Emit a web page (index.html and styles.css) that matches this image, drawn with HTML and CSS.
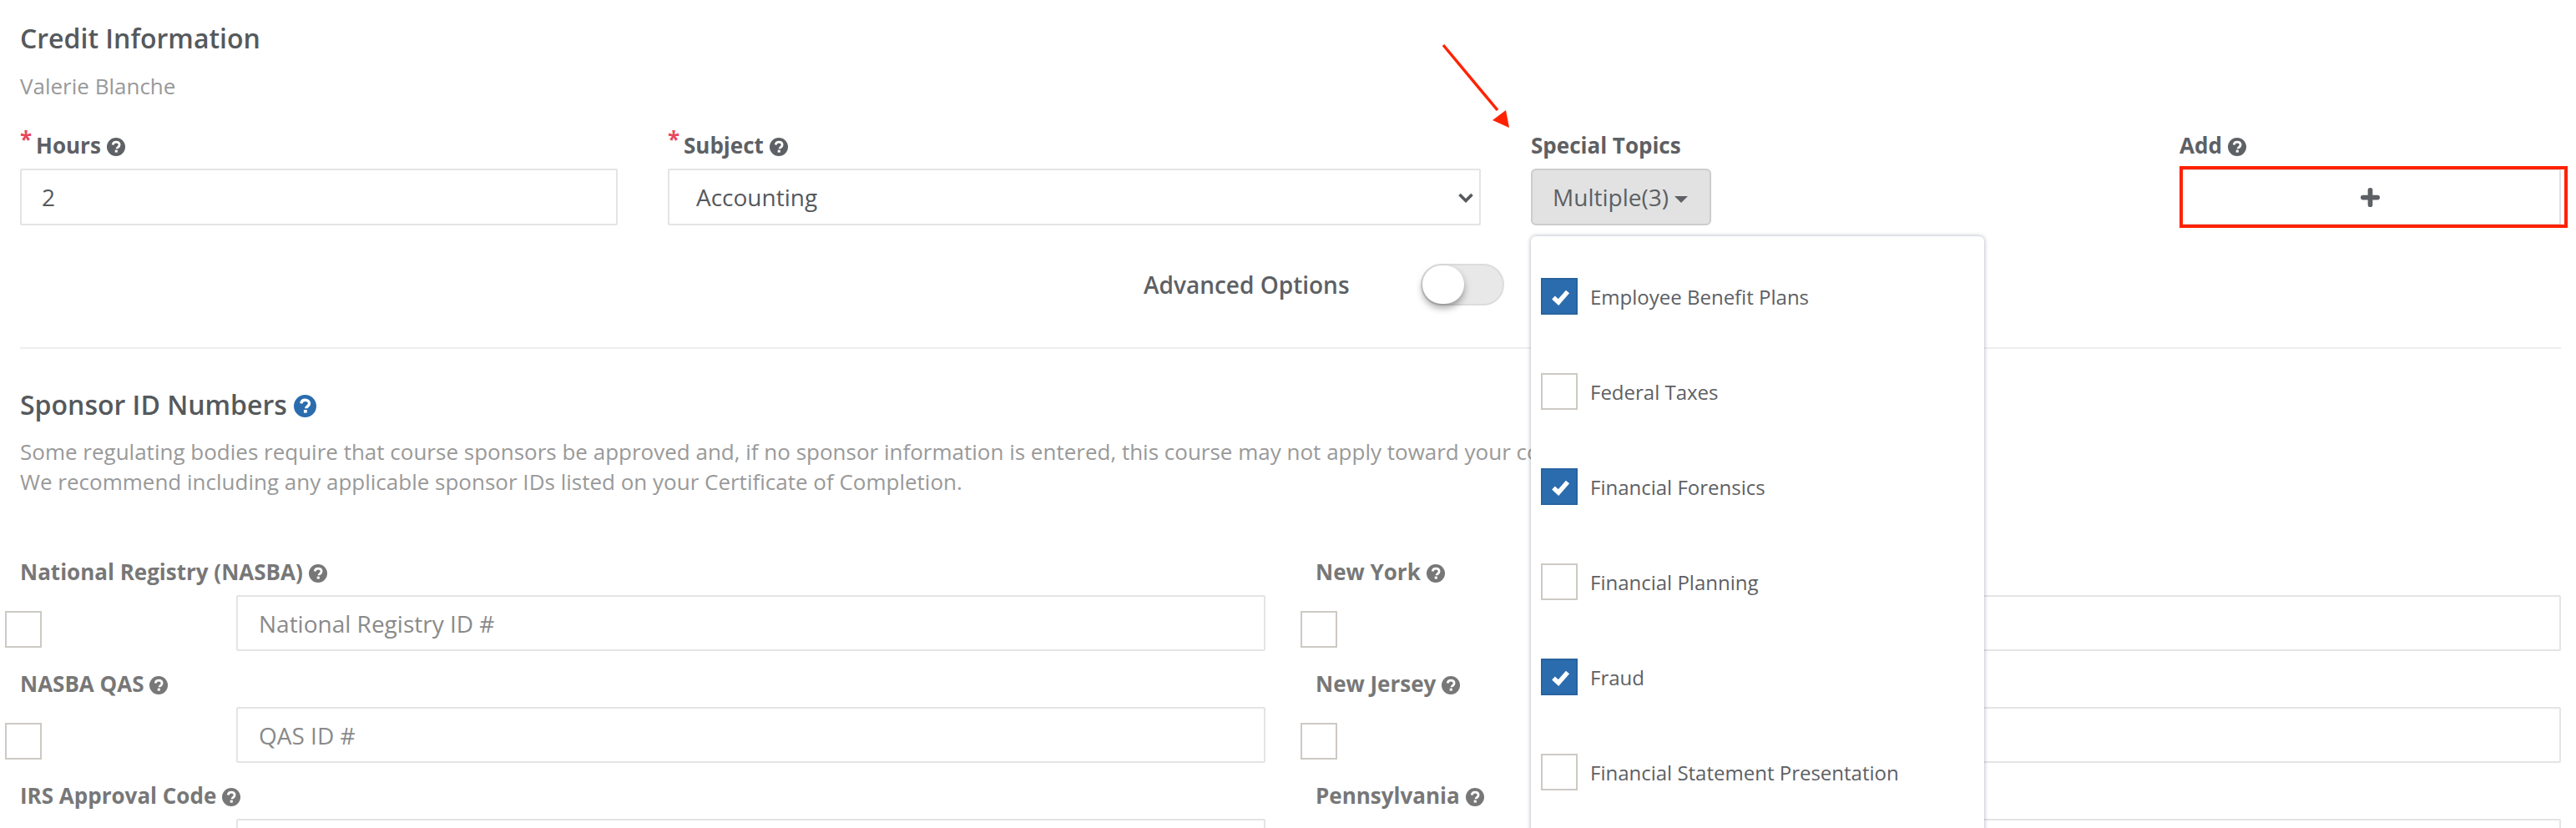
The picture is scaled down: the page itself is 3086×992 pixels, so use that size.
FILE: index.html
```html
<!DOCTYPE html>
<html lang="en">
<head>
<meta charset="utf-8">
<title>Credit Information</title>
<link rel="stylesheet" href="styles.css">
</head>
<body>
<svg class="defs" width="0" height="0" aria-hidden="true">
  <symbol id="q" viewBox="0 0 24 24">
    <circle cx="12" cy="12" r="12" fill="currentColor"/>
    <path d="M7.800 9.200C8.200 6.800 9.900 5.600 12.200 5.600c2.500 0 4.300 1.500 4.300 3.600 0 3.100-3.400 3-3.400 5.200" fill="none" stroke="#fff" stroke-width="3"/>
    <rect x="10.600" y="16" width="3.400" height="3.200" fill="#fff"/>
  </symbol>
  <symbol id="check" viewBox="0 0 44 44">
    <path d="M15 23.500l6 5.500 11-12.500" fill="none" stroke="#fff" stroke-width="5.500"/>
  </symbol>
</svg>
<main class="page">
  <h1 class="title">Credit Information</h1>
  <p class="person">Valerie Blanche</p>

  <div class="fields">
    <div class="field">
      <label class="label"><span class="req">*</span>Hours <svg class="qi"><use href="#q"/></svg></label>
      <input class="control" type="text" value="2">
    </div>
    <div class="field">
      <label class="label"><span class="req">*</span>Subject <svg class="qi"><use href="#q"/></svg></label>
      <div class="select-wrap">
        <select class="control select"><option>Accounting</option></select>
        <svg class="chev" viewBox="0 0 18 12"><path d="M1.500 2l7.500 7.500L16.500 2" fill="none" stroke="currentColor" stroke-width="3.600"/></svg>
      </div>
    </div>
    <div class="field topics">
      <label class="label">Special Topics</label>
      <button class="multi" type="button">Multiple(3)<span class="caret"></span></button>
      <div class="menu">
        <div class="item"><span class="box on"><svg class="tick"><use href="#check"/></svg></span>Employee Benefit Plans</div>
        <div class="item"><span class="box"></span>Federal Taxes</div>
        <div class="item"><span class="box on"><svg class="tick"><use href="#check"/></svg></span>Financial Forensics</div>
        <div class="item"><span class="box"></span>Financial Planning</div>
        <div class="item"><span class="box on"><svg class="tick"><use href="#check"/></svg></span>Fraud</div>
        <div class="item"><span class="box"></span>Financial Statement Presentation</div>
      </div>
    </div>
    <div class="field add">
      <label class="label">Add <svg class="qi"><use href="#q"/></svg></label>
      <button class="add-btn" type="button">
        <svg class="plus" viewBox="0 0 24 24"><path d="M12 3v18M3 12h18" fill="none" stroke="currentColor" stroke-width="6" stroke-linecap="round"/></svg>
      </button>
      <span class="mark"></span>
    </div>
  </div>

  <div class="advanced">
    <span class="advanced-label">Advanced Options</span>
    <span class="toggle"><span class="knob"></span></span>
  </div>

  <hr class="rule">

  <h2 class="subtitle">Sponsor ID Numbers <svg class="qi-blue"><use href="#q"/></svg></h2>
  <p class="note">Some regulating bodies require that course sponsors be approved and, if no sponsor information is entered, this course may not apply toward your continuing education requirements.<br>We recommend including any applicable sponsor IDs listed on your Certificate of Completion.</p>

  <div class="sponsors">
    <div class="sponsor">
      <label class="label-soft">National Registry (NASBA) <svg class="qi"><use href="#q"/></svg></label>
      <div class="sponsor-row"><span class="box"></span><input class="control id" type="text" placeholder="National Registry ID #"></div>
    </div>
    <div class="sponsor">
      <label class="label-soft">New York <svg class="qi"><use href="#q"/></svg></label>
      <div class="sponsor-row"><span class="box"></span><input class="control id" type="text"></div>
    </div>
    <div class="sponsor">
      <label class="label-soft">NASBA QAS <svg class="qi"><use href="#q"/></svg></label>
      <div class="sponsor-row"><span class="box"></span><input class="control id" type="text" placeholder="QAS ID #"></div>
    </div>
    <div class="sponsor">
      <label class="label-soft">New Jersey <svg class="qi"><use href="#q"/></svg></label>
      <div class="sponsor-row"><span class="box"></span><input class="control id" type="text"></div>
    </div>
    <div class="sponsor">
      <label class="label-soft">IRS Approval Code <svg class="qi"><use href="#q"/></svg></label>
      <div class="sponsor-row"><span class="box"></span><input class="control id" type="text"></div>
    </div>
    <div class="sponsor">
      <label class="label-soft">Pennsylvania <svg class="qi"><use href="#q"/></svg></label>
      <div class="sponsor-row"><span class="box"></span><input class="control id" type="text"></div>
    </div>
  </div>

  <svg class="arrow" viewBox="0 0 100 120" aria-hidden="true">
    <path d="M9 10L74 88" fill="none" stroke="#ff2200" stroke-width="3.500"/>
    <path d="M88 109L68 100L84 88Z" fill="#ff2200"/>
  </svg>
</main>
</body>
</html>
```

FILE: styles.css
```css
* { box-sizing: border-box; }

html, body {
  margin: 0;
  height: 992px;
  overflow: hidden;
  background: #fff;
}

body {
  font-family: "Open Sans", "Liberation Sans", sans-serif;
  color: #55595c;
}

.defs { position: absolute; }

.page {
  position: relative;
  height: 992px;
  padding: 26px 10px 0 24px;
  overflow: hidden;
}

.title {
  margin: 0;
  font-size: 32px;
  line-height: 40px;
  font-weight: 600;
}

.person {
  margin: 19px 0 0;
  font-size: 26px;
  line-height: 36px;
  color: #999;
}

.fields {
  display: grid;
  grid-template-columns: 716px 974px 717px 1fr;
  column-gap: 60px;
  margin-top: 35px;
}

.field { position: relative; }

.label {
  display: block;
  height: 36px;
  margin-bottom: 10px;
  font-size: 26px;
  line-height: 36px;
  font-weight: 700;
  color: #5d6064;
  white-space: nowrap;
}

.req {
  display: inline-block;
  width: 19px;
  vertical-align: 7px;
  line-height: 20px;
  color: #e8475f;
}

.qi {
  width: 22px;
  height: 22px;
  vertical-align: -3px;
}

.control {
  display: block;
  width: 100%;
  height: 68px;
  padding: 0 24px;
  border: 2px solid #e4e4e4;
  border-radius: 2px;
  background: #fff;
  font: 28px "Open Sans", "Liberation Sans", sans-serif;
  color: #55595c;
  outline: none;
}

.control::placeholder { color: #8a8a8a; opacity: 1; }

.select-wrap { position: relative; }

.select {
  appearance: none;
  padding-left: 32px;
}

.chev {
  position: absolute;
  top: 29px;
  right: 9px;
  width: 18px;
  height: 12px;
  color: #55595c;
}

.multi {
  display: block;
  width: 216px;
  height: 68px;
  padding: 0 2px 0 0;
  border: 2px solid #ccc;
  border-radius: 6px;
  background: #e2e2e2;
  font: 28px "Open Sans", "Liberation Sans", sans-serif;
  color: #5d6064;
}

.caret {
  display: inline-block;
  margin-left: 7px;
  vertical-align: 4px;
  border-top: 8px solid #5d6064;
  border-left: 8px solid transparent;
  border-right: 8px solid transparent;
}

.menu {
  position: absolute;
  top: 127px;
  left: 0;
  width: 543px;
  height: 760px;
  padding: 51px 12px 0;
  border-radius: 6px;
  background: #fff;
  box-shadow: 0 0 5px rgba(80, 90, 120, 0.5);
  z-index: 2;
}

.item {
  display: flex;
  gap: 15px;
  align-items: center;
  height: 114px;
  padding-bottom: 72px;
  font-size: 24px;
  color: #5d6064;
}

.box {
  display: block;
  flex: none;
  width: 44px;
  height: 44px;
  border: 2px solid #cdc9c4;
  background: #fff;
}

.box.on {
  border-color: #28639f;
  background: #2b6cae;
}

.tick {
  display: block;
  width: 44px;
  height: 44px;
  margin: -2px;
}

.add { position: relative; }

.add-btn {
  display: flex;
  align-items: center;
  justify-content: center;
  width: 457px;
  height: 68px;
  padding: 0;
  border: 2px solid #e0e0e0;
  border-radius: 2px;
  background: #fff;
  color: #5d6064;
}

.plus { width: 23px; height: 23px; }

.mark {
  position: absolute;
  left: 0;
  top: 43px;
  width: 465px;
  height: 74px;
  border: 4px solid #ff2200;
}

.advanced {
  display: flex;
  align-items: center;
  gap: 85px;
  height: 50px;
  margin-top: 46px;
  padding-left: 1346px;
}

.advanced-label {
  font-size: 28px;
  font-weight: 600;
  color: #5d6064;
}

.toggle {
  display: block;
  width: 100px;
  height: 50px;
  border: 2px solid #dcdcdc;
  border-radius: 25px;
  background: #e8e8e8;
}

.knob {
  display: block;
  width: 50px;
  height: 46px;
  border-radius: 25px;
  background: #fff;
  box-shadow: 0 5px 9px rgba(0, 0, 0, 0.35);
}

.rule {
  height: 2px;
  margin: 50px 8px 0 0;
  border: 0;
  background: #eee;
}

.subtitle {
  margin: 47px 0 0;
  font-size: 32px;
  line-height: 40px;
  font-weight: 600;
}

.qi-blue {
  width: 27px;
  height: 27px;
  vertical-align: -3px;
  color: #2b6cae;
}

.note {
  margin: 18px 0 0;
  font-size: 26px;
  line-height: 36px;
  color: #999;
}

.sponsors {
  display: grid;
  grid-template-columns: 1510px 1510px;
  column-gap: 42px;
  row-gap: 21px;
  margin: 72px 0 0 -18px;
}

.label-soft {
  display: block;
  height: 36px;
  margin-bottom: 10px;
  padding-left: 18px;
  font-size: 26px;
  line-height: 36px;
  font-weight: 700;
  color: #777;
  white-space: nowrap;
}

.sponsor-row {
  display: flex;
  align-items: flex-start;
  gap: 233px;
}

.sponsor-row .box { margin-top: 19px; }

.id {
  flex: 1;
  height: 67px;
  padding: 0 24px 0 25px;
}

.arrow {
  position: absolute;
  left: 1720px;
  top: 44px;
  width: 100px;
  height: 120px;
}
```
